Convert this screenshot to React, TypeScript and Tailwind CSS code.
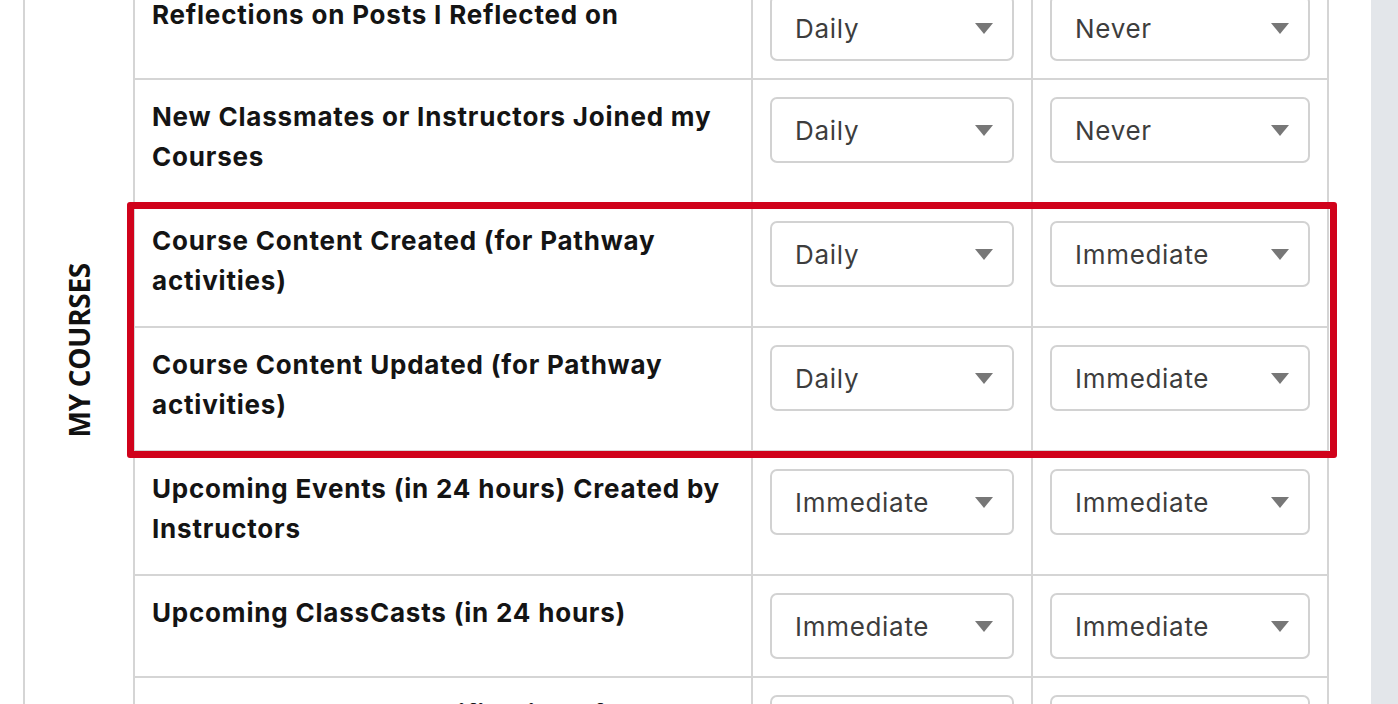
import React from "react";

type Row = {
  label: string;
  email: string;
  push: string;
  highlight?: boolean;
};

const rows: Row[] = [
  { label: "Reflections on Posts I Reflected on", email: "Daily", push: "Never" },
  { label: "New Classmates or Instructors Joined my Courses", email: "Daily", push: "Never" },
  { label: "Course Content Created (for Pathway activities)", email: "Daily", push: "Immediate", highlight: true },
  { label: "Course Content Updated (for Pathway activities)", email: "Daily", push: "Immediate", highlight: true },
  { label: "Upcoming Events (in 24 hours) Created by Instructors", email: "Immediate", push: "Immediate" },
  { label: "Upcoming ClassCasts (in 24 hours)", email: "Immediate", push: "Immediate" },
  { label: "24 Hours Due Date Notification of Assignments", email: "Immediate", push: "Immediate" },
];

function Select({ value }: { value: string }) {
  return (
    <div className="flex h-[66px] items-center justify-between rounded-[7px] border-2 border-[#d2d2d2] bg-white pl-[23px] pr-[19px] text-[26px] tracking-[0.7px] text-[#3d3d3d]">
      <span>{value}</span>
      <svg width="18" height="11" viewBox="0 0 18 11" className="shrink-0">
        <path d="M0 0H18L9 11Z" fill="#777777" />
      </svg>
    </div>
  );
}

function SettingRow({ row }: { row: Row }) {
  return (
    <div className="flex border-b-2 border-[#d5d5d5]">
      <div className="w-[616px] shrink-0 px-[17px] pt-[17px] pb-[25px] text-[26px] font-bold leading-[40px] tracking-[0.8px] text-[#141414]">
        {row.label}
      </div>
      <div className="w-[280px] shrink-0 border-l-2 border-[#d5d5d5] p-[17px]">
        <Select value={row.email} />
      </div>
      <div className="w-[296px] shrink-0 border-l-2 border-[#d5d5d5] p-[17px]">
        <Select value={row.push} />
      </div>
    </div>
  );
}

export default function App() {
  const before = rows.slice(0, 2);
  const marked = rows.filter((r) => r.highlight);
  const after = rows.slice(4);

  return (
    <div className="flex h-[704px] w-[1398px] overflow-hidden bg-[#e3e6ea] font-['Inter','Liberation_Sans',sans-serif]">
      <div className="w-[1371px] shrink-0 overflow-hidden bg-white pl-[23px]">
        <div className="-mt-[22px] flex">
          {/* Section label */}
          <div className="flex w-[112px] shrink-0 justify-center border-x-2 border-[#d5d5d5] pt-[285px]">
            <span className="h-fit rotate-180 font-['Open_Sans',sans-serif] text-[28px] font-bold leading-none tracking-[-0.3px] text-[#111] [writing-mode:vertical-rl]">
              MY COURSES
            </span>
          </div>

          <div className="w-[1194px] shrink-0 border-r-2 border-[#d5d5d5]">
            {before.map((row) => (
              <SettingRow key={row.label} row={row} />
            ))}
            <div className="relative">
              {marked.map((row) => (
                <SettingRow key={row.label} row={row} />
              ))}
              <div className="pointer-events-none absolute -top-[2px] -right-[10px] -bottom-[6px] -left-[8px] z-10 rounded-[3px] border-[7px] border-[#d0021b]" />
            </div>
            {after.map((row) => (
              <SettingRow key={row.label} row={row} />
            ))}
          </div>
        </div>
      </div>
    </div>
  );
}
